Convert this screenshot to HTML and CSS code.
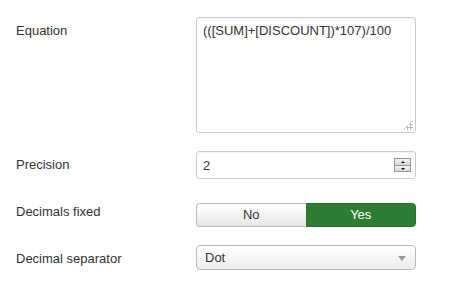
FILE: index.html
```html
<!DOCTYPE html>
<html lang="en">
<head>
  <meta charset="UTF-8">
  <title>Calculation field</title>
  <link rel="stylesheet" href="styles.css">
</head>
<body>

  <!-- Field options -->
  <form class="options">

    <div class="control-group">
      <label class="control-label">Equation</label>
      <div class="controls">
        <div class="area-wrap">
          <textarea class="equation">(([SUM]+[DISCOUNT])*107)/100</textarea>
          <span class="grip"></span>
        </div>
      </div>
    </div>

    <div class="control-group">
      <label class="control-label">Precision</label>
      <div class="controls">
        <div class="number-wrap">
          <input type="text" class="number" value="2">
          <span class="spinner">
            <span class="spin up"></span>
            <span class="spin down"></span>
          </span>
        </div>
      </div>
    </div>

    <div class="control-group toggle-group">
      <label class="control-label">Decimals fixed</label>
      <div class="controls">
        <div class="btn-group">
          <label class="btn">No</label>
          <label class="btn active">Yes</label>
        </div>
      </div>
    </div>

    <div class="control-group">
      <label class="control-label">Decimal separator</label>
      <div class="controls">
        <div class="select">
          <span>Dot</span>
          <span class="caret"></span>
        </div>
      </div>
    </div>

  </form>

</body>
</html>
```

FILE: styles.css
```css
/* Reset & base */
* { margin: 0; padding: 0; box-sizing: border-box; }
body { font-family: "Liberation Sans", Arial, sans-serif; font-size: 13px; line-height: 18px; color: #333; background: #fff; }

/* Form rows */
.options { padding: 17px 0 0 16px; }
.control-group { display: flex; align-items: flex-start; margin-bottom: 18px; }
.control-label { width: 180px; padding-top: 5px; }
.controls { width: 220px; }
.toggle-group { margin-top: 24px; }
.toggle-group .control-label { padding-top: 0; }

/* Textarea */
.area-wrap { position: relative; }
.equation {
  display: block;
  width: 220px;
  height: 116px;
  padding: 4px 6px;
  border: 1px solid #ccc;
  border-radius: 3px;
  font: inherit;
  color: #333;
  resize: none;
  box-shadow: inset 0 1px 1px rgba(0,0,0,0.05);
}
.grip {
  position: absolute;
  right: 3px; bottom: 3px;
  width: 10px; height: 10px;
  background:
    radial-gradient(circle, #bbb 1px, transparent 1.2px) 0 0 / 3px 3px;
  clip-path: polygon(100% 0, 100% 100%, 0 100%);
}

/* Number input */
.number-wrap { position: relative; }
.number {
  display: block;
  width: 220px;
  height: 28px;
  padding: 4px 6px;
  border: 1px solid #ccc;
  border-radius: 3px;
  font: inherit;
  color: #333;
  box-shadow: inset 0 1px 1px rgba(0,0,0,0.05);
}
.spinner {
  position: absolute;
  right: 5px; top: 7px;
  width: 17px; height: 14px;
  display: flex; flex-direction: column;
}
.spin {
  flex: 1;
  border: 1px solid #999;
  background: linear-gradient(#f4f4f4, #d6d6d6);
  position: relative;
}
.spin + .spin { border-top: none; }
.spin::after {
  content: "";
  position: absolute;
  left: 6px; top: 2px;
  border-left: 2px solid transparent;
  border-right: 2px solid transparent;
}
.up::after { border-bottom: 2px solid #111; }
.down::after { border-top: 2px solid #111; }

/* Yes / No toggle */
.btn-group { display: flex; height: 24px; }
.btn {
  flex: 1;
  text-align: center;
  line-height: 22px;
  border: 1px solid #bbb;
  background: linear-gradient(#fff, #e6e6e6);
  color: #333;
}
.btn:first-child { border-radius: 4px 0 0 4px; border-right: none; }
.btn:last-child { border-radius: 0 4px 4px 0; }
.btn.active {
  background: #2f7d32;
  border-color: #2a6f2c;
  color: #fff;
}

/* Select */
.select {
  position: relative;
  height: 25px;
  padding: 0 8px;
  line-height: 23px;
  border: 1px solid #bbb;
  border-radius: 4px;
  background: linear-gradient(#fff, #ededed);
}
.caret {
  position: absolute;
  right: 9px; top: 10px;
  border-left: 4px solid transparent;
  border-right: 4px solid transparent;
  border-top: 5px solid #999;
}
```
